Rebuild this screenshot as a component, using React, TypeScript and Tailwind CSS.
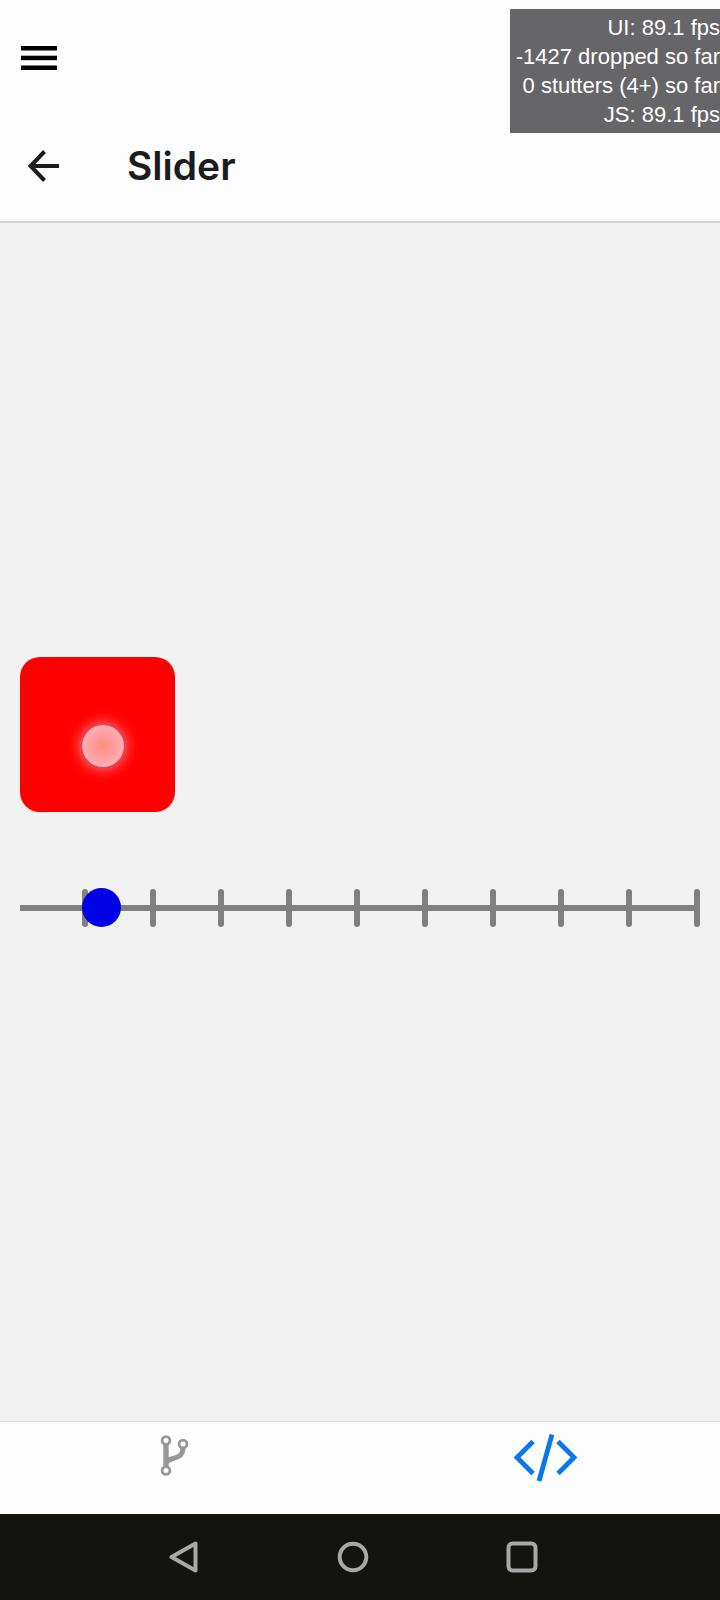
import { useState } from "react";

const TICKS = Array.from({ length: 10 }, (_, i) => i);

const STATS = [
  "UI: 89.1 fps",
  "-1427 dropped so far",
  "0 stutters (4+) so far",
  "JS: 89.1 fps",
];

function PerfMonitor() {
  return (
    <div className="absolute top-[9px] right-0 bg-[#666669] py-1 pl-1.5 text-right font-['Liberation_Sans',sans-serif] text-[22px] leading-[29px] whitespace-nowrap text-white">
      {STATS.map((line) => (
        <p key={line}>{line}</p>
      ))}
    </div>
  );
}

function Header() {
  return (
    <header className="border-b-2 border-[#d4d4d6] bg-[#fdfdfe]">
      <div className="flex h-[115px] items-center pl-[21px]">
        <button type="button" aria-label="Open menu">
          <svg width="36" height="24" viewBox="0 0 36 24" fill="#000">
            <rect y="0" width="36" height="4.5" />
            <rect y="9.7" width="36" height="4.5" />
            <rect y="19.5" width="36" height="4.5" />
          </svg>
        </button>
      </div>
      <div className="flex h-[106px] items-center gap-[67px] pb-1 pl-7">
        <button type="button" aria-label="Back">
          <svg
            width="32"
            height="32"
            viewBox="0 0 32 32"
            fill="none"
            stroke="#1c1c1e"
            strokeWidth="4"
          >
            <path d="M31 16H3M16.5 1.5L2.5 16l14 14.5" />
          </svg>
        </button>
        <h1 className="text-[39px] leading-12 font-semibold text-[#1c1c1e]">
          Slider
        </h1>
      </div>
    </header>
  );
}

function StepSlider() {
  const [value, setValue] = useState(9.6);
  return (
    <div className="relative">
      <div className="grid h-10 grid-cols-10 items-center" aria-hidden="true">
        {TICKS.map((tick) => (
          <div key={tick} className="flex items-center">
            <div className="h-1.5 flex-1 bg-[#808080]" />
            <div className="h-[38px] w-1.5 rounded-full bg-[#808080]" />
          </div>
        ))}
      </div>
      <input
        type="range"
        aria-label="Position"
        min={0}
        max={100}
        step="any"
        value={value}
        onChange={(e) => setValue(Number(e.target.value))}
        className="absolute inset-0 h-full w-full appearance-none bg-transparent [&::-webkit-slider-thumb]:size-[39px] [&::-webkit-slider-thumb]:appearance-none [&::-webkit-slider-thumb]:rounded-full [&::-webkit-slider-thumb]:bg-[#0000e6]"
      />
    </div>
  );
}

function TabBar() {
  return (
    <nav className="grid h-[93px] grid-cols-2 border-t border-[#dededf] bg-[#fdfdfe]">
      <button
        type="button"
        aria-label="Branches"
        className="flex justify-center pt-3"
      >
        <svg width="40" height="44" viewBox="0 0 40 44" fill="none" stroke="#98989a">
          <path d="M6 11V33" strokeWidth="5.4" />
          <path d="M23 13C23 22 18 23 13 24.500C9 25.700 7 27 6 29" strokeWidth="5" />
          <g fill="#fdfdfe" strokeWidth="2.8">
            <circle cx="6" cy="6.500" r="3.900" />
            <circle cx="23" cy="10" r="3.900" />
            <circle cx="6" cy="36.500" r="3.900" />
          </g>
        </svg>
      </button>
      <button
        type="button"
        aria-label="Code"
        className="flex justify-center pt-3"
      >
        <svg
          width="78"
          height="48"
          viewBox="0 0 78 48"
          fill="none"
          stroke="#0878ea"
          strokeWidth="4.8"
        >
          <path d="M32 7.500L16 23.500L32 39.500M57 7.500L73 23.500L57 39.500M51 0.500L38 47" />
        </svg>
      </button>
    </nav>
  );
}

function SystemBar() {
  return (
    <nav
      aria-label="System"
      className="flex h-[86px] items-center justify-center bg-[#13130f] pr-3.5"
    >
      <div className="grid w-[72%] grid-cols-3 justify-items-center">
        <button type="button" aria-label="Back">
          <svg width="32" height="32" viewBox="0 0 32 32" fill="none" stroke="#a8a8a8">
            <path d="M27.500 2.500V29.500L3.500 16Z" strokeWidth="4" strokeLinejoin="round" />
          </svg>
        </button>
        <button type="button" aria-label="Home">
          <svg width="32" height="32" viewBox="0 0 32 32" fill="none" stroke="#a8a8a8">
            <circle cx="16" cy="16" r="13.300" strokeWidth="4" />
          </svg>
        </button>
        <button type="button" aria-label="Recent apps">
          <svg width="32" height="32" viewBox="0 0 32 32" fill="none" stroke="#a8a8a8">
            <rect x="2.500" y="2.500" width="27" height="27" rx="4" strokeWidth="4" />
          </svg>
        </button>
      </div>
    </nav>
  );
}

export default function App() {
  return (
    <div className="relative flex min-h-screen flex-col overflow-x-hidden bg-[#f2f2f2] font-['Inter','Liberation_Sans',sans-serif]">
      <Header />
      <main className="flex flex-1 flex-col justify-center gap-[76px] px-5 pb-[60px]">
        <div className="relative size-[155px] rounded-[20px] bg-[#ff0000]">
          <div className="absolute top-[68px] left-[62px] size-[42px] rounded-full bg-[radial-gradient(circle,#ff8c80_0%,#ffa0a4_45%,#ffb0b4_70%)] shadow-[0_0_3px_1px_#c05068,0_0_12px_4px_#ff5a5a]" />
        </div>
        <StepSlider />
      </main>
      <TabBar />
      <SystemBar />
      <PerfMonitor />
    </div>
  );
}
